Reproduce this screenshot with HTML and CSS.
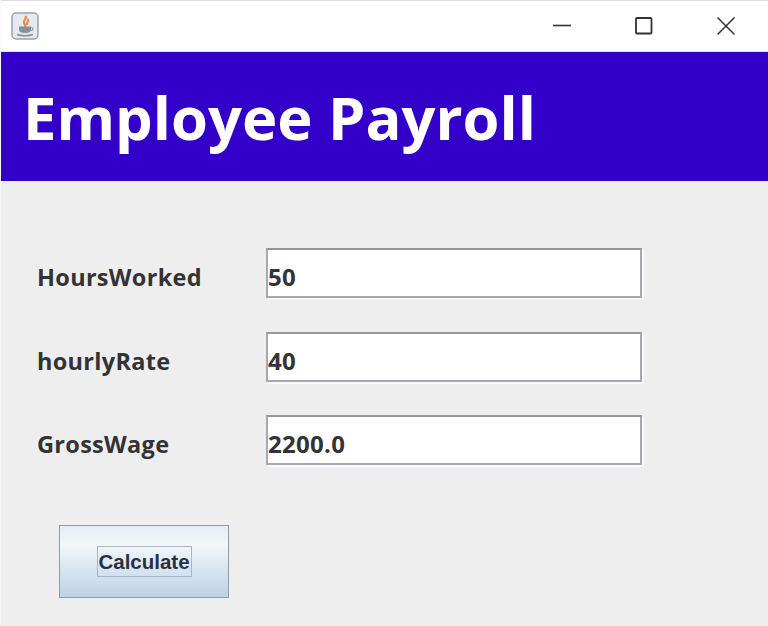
FILE: index.html
```html
<!DOCTYPE html>
<html lang="en">
  <head>
    <meta charset="UTF-8" />
    <meta name="viewport" content="width=device-width, initial-scale=1.0" />
    <title>Employee Payroll</title>
    <link rel="stylesheet" href="styles.css">
  </head>
  <body>
    <div class="window">
      <!-- title bar -->
      <div class="titlebar">
        <svg class="app-icon" width="28" height="28" viewBox="0 0 28 28">
          <rect x="1" y="1" width="26" height="26" rx="4" fill="#e6e9ed" stroke="#9aa2aa" stroke-width="1.5" />
          <path d="M14.500 4c2 3-3 4-1.500 7s1.500 2 1 4M17 7c1 2-1.500 3-1 6" fill="none" stroke="#ea8a45" stroke-width="2.200" />
          <path d="M8 14.500h12v3c0 2.500-2 3.500-6 3.500s-6-1-6-3.500z" fill="#8290a0" />
          <path d="M20 15.500c2.500 0 2.500 3 0 3" fill="none" stroke="#8290a0" stroke-width="1.200" />
          <path d="M6 22.500c4 1.500 12 1.500 16 0" fill="none" stroke="#8290a0" stroke-width="1.500" />
        </svg>
        <div class="controls">
          <svg width="18" height="18" viewBox="0 0 18 18"><path d="M0 8.500h18" stroke="#333" stroke-width="1.600" /></svg>
          <svg width="18" height="18" viewBox="0 0 18 18"><rect x="1" y="1" width="15.500" height="15.500" rx="1" fill="none" stroke="#333" stroke-width="1.800" /></svg>
          <svg width="18" height="18" viewBox="0 0 18 18"><path d="M0.500 0.500l17 17M17.500 0.500l-17 17" stroke="#333" stroke-width="1.500" /></svg>
        </div>
      </div>

      <!-- banner -->
      <div class="banner">
        <h1>Employee Payroll</h1>
      </div>

      <!-- form -->
      <div class="content">
        <div class="form">
          <label class="field-label">HoursWorked</label>
          <div class="field">50</div>
          <label class="field-label">hourlyRate</label>
          <div class="field">40</div>
          <label class="field-label">GrossWage</label>
          <div class="field">2200.0</div>
        </div>
        <button class="calc-btn"><span>Calculate</span></button>
      </div>
    </div>
  </body>
</html>
```

FILE: styles.css
```css
/* page */
body {
  margin: 0;
  padding: 0;
  background-color: #eeeeee;
  font-family: "Open Sans", sans-serif;
}

.window {
  width: 768px;
  height: 626px;
  box-sizing: border-box;
  overflow: hidden;
  border-left: 1px solid #f8f8f8;
  display: flex;
  flex-direction: column;
}

/* title bar */
.titlebar {
  height: 51px;
  flex-shrink: 0;
  box-sizing: border-box;
  border-top: 1px solid #dddddd;
  background-color: #ffffff;
  display: flex;
  align-items: center;
  justify-content: space-between;
  padding: 0 33px 0 10px;
}

.controls {
  display: flex;
  align-items: center;
  gap: 64px;
}

/* banner */
.banner {
  height: 130px;
  flex-shrink: 0;
  background-color: #3300c9;
  display: flex;
  align-items: center;
  padding-left: 22px;
  border-top: 1px solid #e6dff5;
  box-sizing: border-box;
}

.banner h1 {
  margin: 0;
  color: #ffffff;
  font-size: 59.700px;
  font-weight: 700;
  line-height: 1;
}

/* form */
.content {
  flex: 1;
  padding: 67px 0 0 36px;
}

.form {
  display: grid;
  grid-template-columns: 229px 376px;
  grid-auto-rows: 50px;
  row-gap: 33.500px;
  align-items: center;
}

.field-label {
  font-size: 23.500px;
  font-weight: 700;
  letter-spacing: 0.300px;
  color: #333333;
  padding-top: 8px;
}

.field {
  height: 50px;
  box-sizing: border-box;
  background-color: #ffffff;
  border: 2px solid #a8a8b0;
  border-top-color: #96969d;
  box-shadow: 2px 2px 0 #f9f9f9;
  padding: 7px 0 0 0;
  display: flex;
  align-items: center;
  font-size: 24px;
  font-weight: 700;
  letter-spacing: 0.300px;
  color: #333333;
}

/* button */
.calc-btn {
  display: flex;
  align-items: center;
  justify-content: center;
  width: 170px;
  height: 73px;
  margin: 60px 0 0 22px;
  padding: 0;
  border: 1.500px solid #8c9aab;
  background: linear-gradient(to bottom, #e3edf6 0%, #f3f8fc 25%, #d9e6f1 60%, #bcd2e6 100%);
}

.calc-btn span {
  box-sizing: border-box;
  width: 95px;
  height: 31px;
  border: 1px solid #aab6c6;
  display: flex;
  align-items: center;
  justify-content: center;
  font-family: "Liberation Sans", sans-serif;
  font-size: 20.500px;
  font-weight: 700;
  color: #2b3040;
}
```
